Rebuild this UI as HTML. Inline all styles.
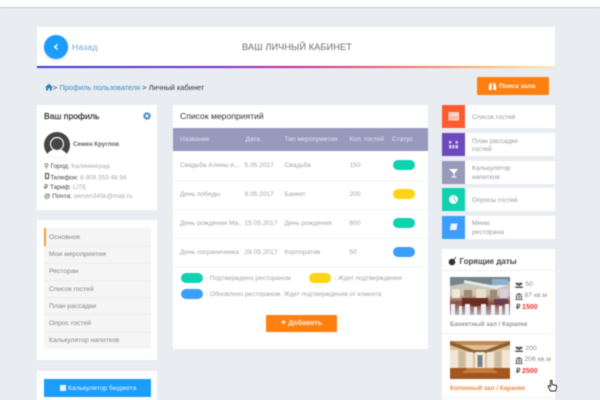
<!DOCTYPE html>
<html><head><meta charset="utf-8"><style>
html,body{margin:0;padding:0}
body{width:600px;height:400px;overflow:hidden;background:#e9edf2;font-family:"Liberation Sans",sans-serif;position:relative}
#w{position:absolute;left:0;top:0;width:600px;height:400px;filter:blur(.5px);overflow:hidden}
.a{position:absolute;white-space:nowrap}
.c{position:absolute;background:#fff}
.g{color:#a4a4a4;font-size:6.6px}
.h{color:#e4e4ef;font-size:6.6px;top:135.5px}
.lg{color:#a4a4a4;font-size:6.4px}
.m{position:absolute;left:49px;color:#858585;font-size:6.8px;white-space:nowrap}
.l{position:absolute;left:44px;width:107px;height:1px;background:#ececec}
.r{position:absolute;left:172.5px;width:255.5px;height:1px;background:#f3f3f3}
.p{position:absolute;width:22px;height:10px;border-radius:5px}
.t{position:absolute;left:442px;width:113px;height:23px;background:#fff}
.t i{position:absolute;left:0;top:0;width:23px;height:23px;display:block}
.t span{position:absolute;left:30px;font-size:6.6px;line-height:8.5px;color:#999;white-space:nowrap}
.t svg{position:absolute;left:0;top:0}
.s{font-size:6.8px;color:#8e8e8e}
.q{font-size:6.4px;color:#444}
.q span{color:#aaa}
</style></head><body><div id="w">
<div class="a" style="left:0;top:-2px;width:600px;height:9px;background:#fff;border-bottom:1.5px solid #c6c8c9"></div>

<div class="c" style="left:37px;top:27px;width:518px;height:40px;box-shadow:0 1px 3px rgba(0,0,0,.04)"></div>
<div class="a" style="left:37px;top:66px;width:518px;height:1.5px;background:linear-gradient(90deg,#3a3ad0 0%,#7a2fc8 35%,#c42aa0 50%,#ef6a6a 70%,#f9c070 88%,#fde9b8 100%)"></div>
<div class="a" style="left:44px;top:35px;width:24px;height:24px;border-radius:50%;background:#1a9dfb;box-shadow:0 1px 3px rgba(0,0,0,.15)"></div>
<svg class="a" style="left:44px;top:35px" width="24" height="24"><path d="M13.5 9.5L10.8 12l2.7 2.5" fill="none" stroke="#fff" stroke-width="1.5"/></svg>
<div class="a" style="left:72px;top:42px;font-size:8.6px;color:#6ea6cc;letter-spacing:.2px">Назад</div>
<div class="a" style="left:242px;top:42px;font-size:9.2px;color:#6d6d6d;letter-spacing:.1px">ВАШ ЛИЧНЫЙ КАБИНЕТ</div>

<svg class="a" style="left:45px;top:83px" width="8" height="8" viewBox="0 0 8 8"><path d="M4 .8L0 4.4h1.1V7.600h2V5.300h1.800v2.300h2V4.400H8z" fill="#2d7fb8"/></svg>
<div class="a" style="left:53px;top:83px;font-size:7.4px;color:#333"> &gt; <span style="color:#3b8cc0">Профиль пользователя</span> &gt; <span style="color:#333">Личный кабинет</span></div>

<div class="a" style="left:477px;top:77px;width:72px;height:18px;background:#ff7f10;border-radius:1px"></div>
<svg class="a" style="left:488px;top:82px" width="9" height="9" viewBox="0 0 9 9"><path d="M.8 8V4.200L2 1h1.700v7zM5.300 8V1H7l1.200 3.200V8z" fill="#fff"/></svg>
<div class="a" style="left:499px;top:82.500px;font-size:6.600px;font-weight:bold;color:#fff;opacity:.9">Поиск зала</div>

<!-- profile -->
<div class="c" style="left:37px;top:105px;width:120px;height:105px"></div>
<div class="a" style="left:44px;top:111px;font-size:8.600px;color:#222;-webkit-text-stroke:.15px #222">Ваш профиль</div>
<svg class="a" style="left:143px;top:112px" width="8" height="8" viewBox="0 0 8 8"><circle cx="4" cy="4" r="2.300" fill="none" stroke="#3d8cc0" stroke-width="1.700"/><circle cx="4" cy="4" r="3.500" fill="none" stroke="#3d8cc0" stroke-width="1" stroke-dasharray="1.300 1.450"/></svg>
<svg class="a" style="left:44px;top:131.500px" width="26" height="26" viewBox="0 0 26 26"><defs><clipPath id="cp"><circle cx="13" cy="13" r="13"/></clipPath></defs><g clip-path="url(#cp)"><rect width="26" height="26" fill="#454545"/><path d="M2 27c0-6 5-10 11-10s11 4 11 10z" fill="#fff"/><circle cx="13" cy="12" r="6.500" fill="#454545" stroke="#f4f4f4" stroke-width="1.200"/></g></svg>
<div class="a" style="left:73px;top:141px;font-size:6.200px;font-weight:bold;color:#666">Семен Круглов</div>
<div class="a q" style="left:44px;top:162px">⚲ Город: <span>Калининград</span></div>
<div class="a q" style="left:44px;top:172.500px"><b style="display:inline-block;width:2.200px;height:4.500px;border:.7px solid #444;margin:0 1.500px 0 .5px"></b>Телефон: <span>8 909 353 48 94</span></div>
<div class="a q" style="left:44px;top:183px">₽ Тариф: <span>LITE</span></div>
<div class="a q" style="left:44px;top:193px">@ Почта: <span>semen345k@mail.ru</span></div>

<!-- menu -->
<div class="c" style="left:37px;top:220px;width:120px;height:140px"></div>
<div class="a" style="left:44px;top:228px;width:107px;height:121px;background:#f5f5f5"></div>
<div class="a" style="left:44px;top:228px;width:2px;height:18px;background:#f79a3c"></div>
<div class="l" style="top:246px"></div><div class="l" style="top:263px"></div><div class="l" style="top:280px"></div><div class="l" style="top:297px"></div><div class="l" style="top:314px"></div><div class="l" style="top:332px"></div>
<div class="m" style="top:234px">Основное</div>
<div class="m" style="top:251px">Мои мероприятия</div>
<div class="m" style="top:268px">Ресторан</div>
<div class="m" style="top:285.500px">Список гостей</div>
<div class="m" style="top:302.500px">План рассадки</div>
<div class="m" style="top:319.500px">Опрос гостей</div>
<div class="m" style="top:336.500px">Калькулятор напитков</div>

<div class="c" style="left:37px;top:371px;width:120px;height:29px"></div>
<div class="a" style="left:44px;top:379px;width:107px;height:18px;background:#1a9dfb"></div>
<div class="a" style="left:60px;top:385px;width:6px;height:6px;background:#e8f4ff"></div>
<div class="a" style="left:68px;top:384.500px;font-size:6.700px;color:#eef7ff">Калькулятор бюджета</div>

<!-- events -->
<div class="c" style="left:172.500px;top:105px;width:255.500px;height:244px"></div>
<div class="a" style="left:180px;top:111px;font-size:8.600px;color:#333">Список мероприятий</div>
<div class="a" style="left:172.500px;top:128px;width:255.500px;height:23px;background:#9799bd"></div>
<div class="a h" style="left:180px">Название</div>
<div class="a h" style="left:245.500px">Дата</div>
<div class="a h" style="left:284.500px">Тип мероприятия</div>
<div class="a h" style="left:349.500px">Кол. гостей</div>
<div class="a h" style="left:392px">Статус</div>

<div class="a g" style="left:180px;top:161.500px">Свадьба Алены и...</div><div class="a g" style="left:244.500px;top:161.500px">5.05.2017</div><div class="a g" style="left:284.500px;top:161.500px">Свадьба</div><div class="a g" style="left:349.500px;top:161.500px">150</div>
<div class="p" style="left:393px;top:160px;background:#0fd2b0"></div>
<div class="r" style="top:179.500px"></div>
<div class="a g" style="left:180px;top:190.500px">День победы</div><div class="a g" style="left:244.500px;top:190.500px">9.05.2017</div><div class="a g" style="left:284.500px;top:190.500px">Банкет</div><div class="a g" style="left:349.500px;top:190.500px">200</div>
<div class="p" style="left:393px;top:189px;background:#ffd316"></div>
<div class="r" style="top:208.500px"></div>
<div class="a g" style="left:180px;top:219.500px">День рождения Ма..</div><div class="a g" style="left:244.500px;top:219.500px">15.05.2017</div><div class="a g" style="left:284.500px;top:219.500px">День рождения</div><div class="a g" style="left:349.500px;top:219.500px">600</div>
<div class="p" style="left:393px;top:218px;background:#0fd2b0"></div>
<div class="r" style="top:237.500px"></div>
<div class="a g" style="left:180px;top:248.500px">День пограничника</div><div class="a g" style="left:244.500px;top:248.500px">28.05.2017</div><div class="a g" style="left:284.500px;top:248.500px">Корпоратив</div><div class="a g" style="left:349.500px;top:248.500px">50</div>
<div class="p" style="left:393px;top:247px;background:#3b9efb"></div>
<div class="r" style="top:266.500px"></div>

<div class="p" style="left:181px;top:273px;background:#0fd2b0"></div>
<div class="a lg" style="left:206px;top:274.500px">- Подтверждено рестораном</div>
<div class="p" style="left:309px;top:273px;background:#ffd316"></div>
<div class="a lg" style="left:334px;top:274.500px">- Ждет подтверждения</div>
<div class="p" style="left:181px;top:289px;background:#3b9efb"></div>
<div class="a lg" style="left:206px;top:290.500px">- Обновлено рестораном. Ждет подтверждения от клиента</div>
<div class="a" style="left:266px;top:314.500px;width:71px;height:17.500px;background:#ff7f10;border-radius:1px"></div>
<div class="a" style="left:281px;top:319px;font-size:7px;font-weight:bold;color:#fff"><b style="font-size:9px;line-height:7px">+</b> <span style="opacity:.85">Добавить</span></div>

<!-- tiles -->
<div class="t" style="top:105px"><i style="background:#ff5a2f"></i><svg width="23" height="23"><rect x="7" y="7.500" width="9.500" height="7.500" rx=".8" fill="#ffb8a4" stroke="#ffe0d6" stroke-width="1"/><rect x="8" y="9.500" width="7.500" height="1" fill="#fff"/></svg><span style="top:9px">Список гостей</span></div>
<div class="t" style="top:133px"><i style="background:#6d49bd"></i><svg width="23" height="23" fill="#d6ccef"><rect x="7" y="8" width="2.500" height="2.500"/><rect x="13.500" y="8" width="2.500" height="2.500"/><rect x="7" y="12" width="2.500" height="3.500"/><rect x="10.500" y="12" width="2" height="3.500"/><rect x="13.500" y="12" width="2.500" height="3.500"/></svg><span style="top:4.500px">План рассадки<br>гостей</span></div>
<div class="t" style="top:161px"><i style="background:#9799bd"></i><svg width="23" height="23"><path d="M7 8h9l-3.500 4.500v3h2v1h-5v-1h2v-3z" fill="#fff"/></svg><span style="top:4px">Калькулятор<br>напитков</span></div>
<div class="t" style="top:188px"><i style="background:#0fd2b0"></i><svg width="23" height="23"><circle cx="11.500" cy="11.500" r="4.500" fill="#fff"/><path d="M12 11.500V7.500M12 11.500l3 2.500" stroke="#0fd2b0" stroke-width=".7"/></svg><span style="top:9px">Опросы гостей</span></div>
<div class="t" style="top:216px"><i style="background:#3b9efb"></i><svg width="23" height="23"><path d="M9 7.500h6.500l-1.200 7H7.500z" fill="#e8f4ff"/><path d="M7.500 14.500h6.800" stroke="#3b6fb0" stroke-width=".6"/></svg><span style="top:4px">Меню<br>ресторана</span></div>

<!-- hot -->
<div class="c" style="left:442px;top:249px;width:113px;height:151px"></div>
<div class="a" style="left:442px;top:270px;width:113px;height:1px;background:#f0f0f0"></div>
<svg class="a" style="left:448px;top:256px" width="9" height="10" viewBox="0 0 9 10"><circle cx="4" cy="6" r="3.300" fill="#333"/><path d="M6 3.500L8 1" stroke="#333" stroke-width=".8"/></svg>
<div class="a" style="left:459.500px;top:257px;font-size:8px;font-weight:bold;color:#444">Горящие даты</div>

<svg class="a" style="left:450px;top:277px" width="60" height="38" viewBox="0 0 60 38"><defs><linearGradient id="g1" x1="0" y1="0" x2="0" y2="1"><stop offset="0" stop-color="#8e9a9e"/><stop offset=".22" stop-color="#c6c6bc"/><stop offset=".45" stop-color="#d0c4b0"/><stop offset=".68" stop-color="#8a4e3e"/><stop offset="1" stop-color="#b8b0bc"/></linearGradient></defs><rect width="60" height="38" fill="url(#g1)"/><path d="M0 0h60v4L40 8 20 5 0 9z" fill="#75858c"/><path d="M14 3L46 9l12-6v5L46 12 14 6z" fill="#e4e8ea"/><rect x="42" y="2" width="16" height="6" fill="#8fb0c8"/><rect x="2" y="12" width="8" height="9" fill="#eee8da"/><rect x="14" y="13" width="8" height="8" fill="#a08a70"/><rect x="26" y="12" width="10" height="9" fill="#e8e0d0"/><rect x="40" y="13" width="7" height="8" fill="#9a8a78"/><rect x="50" y="12" width="8" height="9" fill="#d8d0dc"/><rect x="12" y="21" width="26" height="8" fill="#6d2c22"/><rect x="44" y="22" width="14" height="6" fill="#6a3c50"/><g fill="#eeeef6"><rect x="1" y="27" width="4" height="11"/><rect x="9" y="29" width="3" height="9"/><rect x="15" y="27" width="5" height="11"/><rect x="24" y="30" width="3" height="8"/><rect x="31" y="27" width="5" height="11"/><rect x="41" y="28" width="4" height="10"/><rect x="49" y="29" width="3" height="9"/><rect x="55" y="27" width="4" height="11"/></g></svg>
<svg class="a" style="left:515px;top:281.500px" width="8" height="7" viewBox="0 0 8 7"><circle cx="2" cy="1.800" r="1.300" fill="#555"/><circle cx="6" cy="1.800" r="1.300" fill="#555"/><circle cx="4" cy="2.500" r="1.500" fill="#555"/><path d="M.2 6V4.500h7.600V6z" fill="#555"/></svg>
<div class="a s" style="left:525.500px;top:281px">50</div>
<svg class="a" style="left:515px;top:292.500px" width="8" height="7" viewBox="0 0 8 7"><path d="M4 0L.3 2h7.400zM1 2.500h1.200v3H1zM3.400 2.500h1.200v3H3.400zM5.800 2.500H7v3H5.800zM.3 6h7.400v1H.3z" fill="#555"/></svg>
<div class="a s" style="left:524.500px;top:292px">87 кв.м</div>
<div class="a" style="left:516px;top:303px;font-size:7px;font-weight:bold;color:#555">₽<span style="color:#e8363c;margin-left:1.500px">1500</span></div>
<div class="a" style="left:450px;top:320.500px;font-size:6.300px;font-weight:bold;color:#999">Банкетный зал / Караоке</div>
<div class="a" style="left:442px;top:333px;width:113px;height:1px;background:#f2f2f2"></div>

<svg class="a" style="left:450px;top:340.500px" width="60" height="38" viewBox="0 0 60 38"><rect width="60" height="38" fill="#dcc09a"/><rect width="60" height="4" fill="#c08a50"/><path d="M0 0L24 9h12L60 0v4L37 12H23L0 4z" fill="#8e5c30"/><rect x="0" y="9" width="8" height="19" fill="#efe6d6"/><rect x="10" y="11" width="4" height="17" fill="#c7b8a0"/><rect x="16" y="11" width="7" height="17" fill="#efe6d6"/><rect x="37" y="11" width="7" height="17" fill="#efe6d6"/><rect x="46" y="11" width="4" height="17" fill="#c7b8a0"/><rect x="52" y="9" width="8" height="19" fill="#efe6d6"/><rect x="25" y="11" width="10" height="16" fill="#f2ead8"/><rect x="27.500" y="14" width="5" height="12" fill="#748488"/><rect x="0" y="27" width="60" height="11" fill="#a3561f"/><path d="M18 27h24l6 5H12z" fill="#c27a3e"/></svg>
<svg class="a" style="left:515px;top:345.500px" width="8" height="7" viewBox="0 0 8 7"><circle cx="2" cy="1.800" r="1.300" fill="#555"/><circle cx="6" cy="1.800" r="1.300" fill="#555"/><circle cx="4" cy="2.500" r="1.500" fill="#555"/><path d="M.2 6V4.500h7.600V6z" fill="#555"/></svg>
<div class="a s" style="left:525.500px;top:345px">200</div>
<svg class="a" style="left:515px;top:356.500px" width="8" height="7" viewBox="0 0 8 7"><path d="M4 0L.3 2h7.400zM1 2.500h1.200v3H1zM3.400 2.500h1.200v3H3.400zM5.800 2.500H7v3H5.800zM.3 6h7.400v1H.3z" fill="#555"/></svg>
<div class="a s" style="left:524.500px;top:356px">206 кв.м</div>
<div class="a" style="left:516px;top:367px;font-size:7px;font-weight:bold;color:#555">₽<span style="color:#e8363c;margin-left:1.500px">2500</span></div>
<div class="a" style="left:450px;top:384.500px;font-size:6.300px;font-weight:bold;color:#f5893a">Колонный зал / Караоке</div>
<div class="a" style="left:442px;top:396.500px;width:113px;height:1px;background:#f2f2f2"></div>

<svg class="a" style="left:547px;top:379px" width="11" height="14" viewBox="0 0 11 14"><path d="M3.500 1.500v6L2 6.500 1 7.500l2.500 4.500h5L9.500 9V6.500L5 5.500V1.500z" fill="#fff" stroke="#222" stroke-width=".9"/></svg>
</div></body></html>
